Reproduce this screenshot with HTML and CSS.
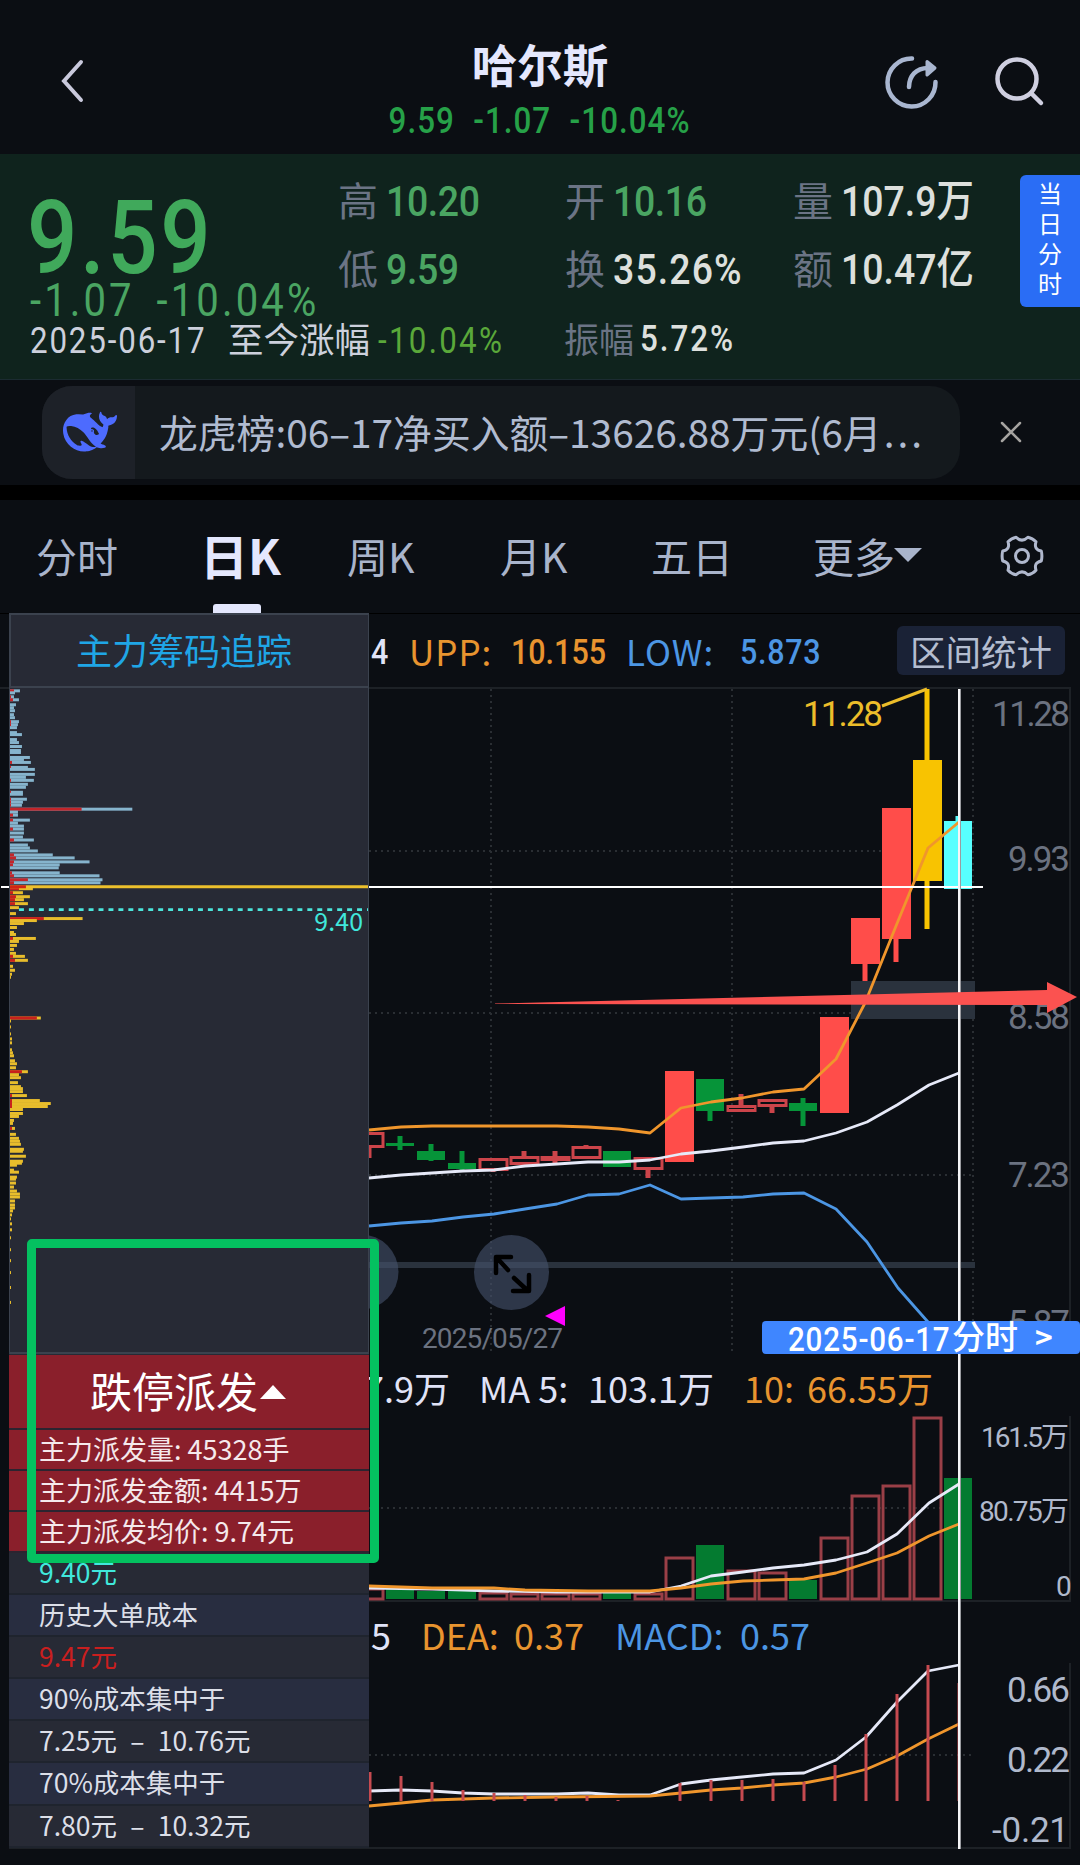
FILE: index.html
```html
<!DOCTYPE html>
<html lang="zh-CN">
<head>
    <meta charset="UTF-8">
    <meta name="viewport" content="width=device-width, initial-scale=1.0">
    <title>哈尔斯 - 日K</title>
    <link rel="stylesheet" href="styles.css">
</head>
<body>
    <header class="topbar">
        <svg class="back" width="24" height="44" viewBox="0 0 24 44"><path d="M21 3 4 22l17 19"/></svg>
        <div class="title">
            <h1>哈尔斯</h1>
            <p><span class="din">9.59 -1.07 -10.04%</span></p>
        </div>
        <svg class="share" width="56" height="56" viewBox="0 0 56 56">
            <path d="M30 4.5A24 24 0 1 0 53.5 28"/>
            <path d="M27 33c0-11 7-19 19-19"/>
            <path class="head" d="M45 7.5 53 14l-8 7z"/>
        </svg>
        <svg class="search" width="50" height="50" viewBox="0 0 50 50"><circle cx="22" cy="22" r="19.5"/><path d="m36 36 10 10"/></svg>
    </header>

    <section class="quote">
        <div class="quote-top">
            <div class="price">
                <div class="big"><span class="din">9.59</span></div>
                <div class="change"><span class="din">-1.07 -10.04%</span></div>
            </div>
            <div class="stat"><label>高</label><span class="din down">10.20</span></div>
            <div class="stat"><label>开</label><span class="din down">10.16</span></div>
            <div class="stat"><label>量</label><span class="din">107.9万</span></div>
            <div class="stat"><label>低</label><span class="din down">9.59</span></div>
            <div class="stat"><label>换</label><span class="din wide">35.26%</span></div>
            <div class="stat"><label>额</label><span class="din">10.47亿</span></div>
        </div>
        <div class="quote-bottom">
            <div class="date"><span class="din">2025-06-17</span></div>
            <div class="since">至今涨幅</div>
            <div class="since-value"><span class="din">-10.04%</span></div>
            <div class="stat"><label>振幅</label><span class="din wide">5.72%</span></div>
        </div>
        <div class="day-tag">当日分时</div>
    </section>

    <section class="news">
        <div class="news-pill">
            <div class="news-logo">
                <svg width="54" height="54" viewBox="0 0 24 24"><path d="M23.748 4.482c-.254-.124-.364.113-.512.234-.051.039-.094.09-.137.136-.372.397-.806.657-1.373.626-.829-.046-1.537.214-2.163.848-.133-.782-.575-1.248-1.247-1.548-.352-.156-.708-.311-.955-.65-.172-.241-.219-.51-.305-.774-.055-.16-.11-.323-.293-.35-.2-.031-.278.136-.356.276-.313.572-.434 1.202-.422 1.84.027 1.436.633 2.58 1.838 3.393.137.093.172.187.129.323-.082.28-.18.552-.266.833-.055.179-.137.217-.329.14a5.526 5.526 0 0 1-1.736-1.18c-.857-.828-1.631-1.742-2.597-2.458a11.365 11.365 0 0 0-.689-.471c-.985-.957.13-1.743.388-1.836.27-.098.093-.432-.779-.428-.872.004-1.67.295-2.687.684a3.055 3.055 0 0 1-.465.137 9.597 9.597 0 0 0-2.883-.102c-1.885.21-3.39 1.102-4.497 2.623C.082 8.606-.231 10.684.152 12.85c.403 2.284 1.569 4.175 3.36 5.653 1.858 1.533 3.997 2.284 6.438 2.14 1.482-.085 3.133-.284 4.994-1.86.47.234.962.327 1.78.397.63.059 1.236-.03 1.705-.128.735-.156.684-.837.419-.961-2.155-1.004-1.682-.595-2.113-.926 1.096-1.296 2.746-2.642 3.392-7.003.05-.347.007-.565 0-.845-.004-.17.035-.237.23-.256a4.173 4.173 0 0 0 1.545-.475c1.396-.763 1.96-2.015 2.093-3.517.02-.23-.004-.467-.247-.588zM11.581 18c-2.089-1.642-3.102-2.183-3.52-2.16-.392.024-.321.471-.235.763.09.288.207.486.371.739.114.167.192.416-.113.603-.673.416-1.842-.14-1.897-.167-1.361-.802-2.5-1.86-3.301-3.307-.774-1.393-1.224-2.887-1.298-4.482-.02-.386.093-.522.477-.592a4.696 4.696 0 0 1 1.529-.039c2.132.312 3.946 1.265 5.468 2.774.868.86 1.525 1.887 2.202 2.891.72 1.066 1.494 2.082 2.48 2.914.348.292.625.514.891.677-.802.09-2.14.11-3.054-.614zm1-6.44a.306.306 0 0 1 .415-.287.302.302 0 0 1 .2.288.306.306 0 0 1-.31.307.303.303 0 0 1-.304-.308zm3.11 1.596c-.2.081-.399.151-.59.16a1.245 1.245 0 0 1-.798-.254c-.274-.23-.47-.358-.552-.758a1.73 1.73 0 0 1 .016-.588c.07-.327-.008-.537-.239-.727-.187-.156-.426-.199-.688-.199a.559.559 0 0 1-.254-.078c-.11-.054-.2-.19-.114-.358.028-.054.16-.186.192-.21.356-.202.767-.136 1.146.016.352.144.618.408 1.001.782.391.451.462.576.685.914.176.265.336.537.445.848.067.195-.019.354-.25.452z"/></svg>
            </div>
            <p>龙虎榜:06–17净买入额–13626.88万元(6月<span>...</span></p>
        </div>
        <svg class="close" width="24" height="24" viewBox="0 0 24 24"><path d="m3 3 18 18M21 3 3 21"/></svg>
    </section>

    <nav class="tabs">
        <span>分时</span>
        <span class="active">日K</span>
        <span>周K</span>
        <span>月K</span>
        <span>五日</span>
        <span class="more">更多</span>
        <svg class="gear" width="46" height="46" viewBox="-23 -23 46 46">
            <circle r="6.5"/>
            <path d="M19.3-5Q20.5 0 19.3 5 11.5 6.6 14 14.2 10.5 18 5.9 18.8 0 13-5.9 18.8-10.5 18-14 14.2-11.5 6.6-19.3 5-20.5 0-19.3-5-11.5-6.6-14-14.2-10.5-18-5.9-18.8 0-13 5.9-18.8 10.5-18 14-14.2 11.5-6.6 19.3-5z"/>
        </svg>
    </nav>

    <main class="charts">
        <div class="legend legend-k">
            <span class="din">4</span>
            <span class="orange">UPP:</span>
            <span class="din orange">10.155</span>
            <span class="blue">LOW:</span>
            <span class="din blue">5.873</span>
            <button>区间统计</button>
        </div>
        <svg class="chart" id="kline" width="1080" height="673" viewBox="0 687 1080 673">
            <path class="grid" d="M491 689V1352M732 689V1352M973 689V1352M369 851H973M369 1013H973M369 1175H973"/>
            <path class="frame" d="M0 688H1070V1352"/>
            <g class="axis">
                <text x="992" y="726" textLength="78">11.28</text>
                <text x="1008" y="871" textLength="62">9.93</text>
                <text x="1008" y="1029" textLength="62">8.58</text>
                <text x="1008" y="1187" textLength="62">7.23</text>
                <text x="1008" y="1335" textLength="62">5.87</text>
                <text class="small" x="422" y="1348" textLength="141">2025/05/27</text>
            </g>
            <path class="gap" d="M851 981H975V1019H851zM369 1262H975V1268H369z"/>
            <g id="candles"></g>
            <polyline class="line orange" points="369,1130 401,1127 432,1126 557,1126 588,1127 619,1129 650,1133 681,1108 711,1102 742,1098 773,1092 804,1089 836,1059 865,1003 896,926 928,848 959,822"/>
            <polyline class="line white" points="369,1178 401,1175 432,1173 463,1171 494,1170 525,1166 557,1164 588,1162 619,1162 650,1160 681,1154 711,1151 743,1147 773,1143 804,1141 836,1133 867,1122 897,1105 929,1085 959,1073"/>
            <polyline class="line blue" points="369,1226 401,1223 432,1221 463,1217 494,1214 525,1209 557,1204 588,1195 619,1194 650,1185 681,1199 711,1198 743,1197 773,1194 804,1193 836,1209 867,1242 898,1288 928,1322"/>
            <path class="peak" d="m882 706 45-17"/>
            <text class="peak-label" x="803" y="726" textLength="80">11.28</text>
            <circle class="knob" cx="361" cy="1272" r="37.5"/>
            <circle class="knob" cx="511.5" cy="1272.5" r="37.5"/>
            <path class="expand" d="M496 1273V1257H511M497 1258 508 1270M514 1278 527 1290M513 1291H529V1275"/>
            <path class="marker" d="m545 1316 20-10v20z"/>
        </svg>
        <div class="legend legend-vol">
            <span>7.9万</span>
            <span>MA 5:</span>
            <span>103.1万</span>
            <span class="orange">10:</span>
            <span class="orange">66.55万</span>
        </div>
        <svg class="chart" id="volume" width="1080" height="188" viewBox="0 1416 1080 188">
            <path class="grid" d="M369 1508H973"/>
            <path class="frame" d="M1070 1416V1601H369"/>
            <g id="volumes"></g>
            <polyline class="line white" points="369,1588 432,1589 494,1591 557,1592 650,1592 681,1586 711,1576 743,1572 773,1568 804,1565 836,1560 867,1552 897,1534 929,1503 959,1484"/>
            <polyline class="line orange" points="369,1586 432,1588 494,1588 525,1590 588,1591 650,1591 681,1588 711,1584 743,1581 773,1580 804,1579 836,1573 867,1563 897,1553 929,1536 959,1524"/>
            <g class="axis light">
                <text class="small" x="981" y="1447" textLength="88">161.5万</text>
                <text class="small" x="979" y="1521" textLength="90">80.75万</text>
                <text class="small" x="1056" y="1596" textLength="14">0</text>
            </g>
        </svg>
        <div class="legend legend-macd">
            <span>5</span>
            <span class="orange">DEA:</span>
            <span class="orange">0.37</span>
            <span class="blue">MACD:</span>
            <span class="blue">0.57</span>
        </div>
        <svg class="chart" id="macd" width="1080" height="202" viewBox="0 1663 1080 202">
            <path class="grid" d="M369 1755H973"/>
            <path class="frame" d="M1070 1663V1848H9"/>
            <polyline class="line white" points="369,1791 401,1790 432,1791 463,1793 494,1794 557,1794 588,1793 619,1795 650,1795 681,1784 711,1780 742,1777 773,1774 804,1773 836,1760 866,1737 897,1702 928,1671 959,1665"/>
            <polyline class="line orange" points="369,1806 401,1803 432,1800 463,1799 494,1798 557,1797 650,1796 681,1793 711,1790 742,1788 773,1785 804,1783 836,1777 867,1769 897,1756 928,1739 959,1724"/>
            <g id="sticks"></g>
            <g class="axis light">
                <text x="1007" y="1702" textLength="63">0.66</text>
                <text x="1007" y="1772" textLength="63">0.22</text>
                <text x="992" y="1842" textLength="77">-0.21</text>
            </g>
        </svg>

        <!-- crosshair -->
        <div class="cross-x"></div>
        <div class="cross-y"></div>

        <aside class="chips">
            <h2>主力筹码追踪</h2>
            <svg class="chart" id="chips" width="360" height="666" viewBox="9 688 360 666">
                <g id="chip-bars"></g>
                <path class="cost" d="M18 910H369"/>
                <text x="315" y="932" textLength="49">9.40</text>
            </svg>
            <div class="dispatch">跌停派发<i></i></div>
            <ul>
                <li class="red">主力派发量: 45328手</li>
                <li class="red">主力派发金额: 4415万</li>
                <li class="red">主力派发均价: 9.74元</li>
                <li class="cyan">9.40元</li>
                <li class="alt">历史大单成本</li>
                <li class="hot">9.47元</li>
                <li class="alt">90%成本集中于</li>
                <li>7.25元&ensp;–&ensp;10.76元</li>
                <li class="alt">70%成本集中于</li>
                <li>7.80元&ensp;–&ensp;10.32元</li>
            </ul>
        </aside>

        <div class="minute-link"><span class="din">2025-06-17</span><b>分时</b><em>&gt;</em></div>
        <div class="mark-box"></div>
        <svg class="mark-arrow" width="584" height="36" viewBox="495 980 584 36"><path d="M495 1003.5 1047 990v-8l30 15-30 16v-8L495 1004z"/></svg>
    </main>

    <script src="script.js"></script>
</body>
</html>
```
FILE: styles.css
```css
* {
    box-sizing: border-box;
}

body {
    margin: 0;
    width: 1080px;
    height: 1865px;
    overflow: hidden;
    background: #0b0e13;
    color: #a9b4cb;
    font-family: "Noto Sans CJK SC", "Noto Sans", sans-serif;
}

h1, h2, p, ul {
    margin: 0;
    padding: 0;
}

svg {
    display: block;
    fill: none;
}

/* narrow numerals */
.din {
    display: inline-block;
    font-family: Roboto, "Noto Sans CJK SC", sans-serif;
    font-weight: 500;
    font-kerning: none;
    transform: scaleX(0.87);
    transform-origin: left center;
    white-space: nowrap;
}

.wide {
    letter-spacing: 1.3px;
}

/* top bar */
.topbar {
    display: flex;
    height: 154px;
    padding-left: 60px;
}

.back {
    margin-top: 59px;
    stroke: #c9c9dc;
    stroke-width: 4;
    stroke-linecap: round;
}

.title {
    width: 792px;
    margin-left: 60px;
    padding-top: 30px;
    text-align: center;
}

.title h1 {
    height: 63px;
    line-height: 66px;
    font-size: 45.5px;
    font-weight: 700;
    color: #e4e7fd;
}

.title p {
    height: 48px;
    line-height: 49px;
    font-size: 36px;
    color: #26a148;
}

.title .din {
    transform-origin: center;
    letter-spacing: 1.2px;
    word-spacing: 11px;
}

.share {
    margin: 54px 0 0 -54px;
    stroke: #a9b6d0;
    stroke-width: 4.5;
    stroke-linecap: round;
}

.share .head {
    fill: #a9b6d0;
    stroke-width: 3;
    stroke-linejoin: round;
}

.search {
    margin: 57px 0 0 57px;
    stroke: #cfcfe0;
    stroke-width: 4.5;
    stroke-linecap: round;
}

/* quote panel */
.quote {
    position: relative;
    height: 226px;
    padding-top: 13px;
    background: #0f231d;
    border-bottom: 1px solid #1b2b31;
}

.quote-top {
    display: grid;
    grid-template-columns: 309px 227px 228px 200px;
    grid-template-rows: 68px 68px;
    padding-left: 30px;
}

.price {
    grid-row: span 2;
}

.big {
    height: 80px;
    margin-top: 26px;
    line-height: 72px;
    font-size: 102px;
    color: #40a95b;
}

.big .din {
    margin-left: -3px;
    letter-spacing: 3px;
}

.change {
    height: 48px;
    line-height: 46px;
    font-size: 46px;
    color: #4aa562;
}

.change .din {
    letter-spacing: 3.6px;
    word-spacing: 10px;
    font-weight: 400;
}

.stat {
    display: flex;
    align-items: center;
    font-size: 43px;
    color: #dde0dd;
}

.stat label {
    width: 47px;
    margin: -5px 1px 0 -1px;
    font-size: 40px;
    line-height: 60px;
    color: #6b7485;
}

.stat .din {
    line-height: 60px;
}

.stat .down {
    color: #4aa562;
    letter-spacing: -0.4px;
}

.quote-bottom {
    display: flex;
    align-items: center;
    height: 71px;
    padding-left: 30px;
    font-size: 36px;
    line-height: 60px;
    color: #ccd0dc;
}

.date {
    width: 198px;
}

.date .din,
.since-value .din {
    letter-spacing: 2.1px;
    font-weight: 400;
}

.since-value .din {
    letter-spacing: 2.6px;
}

.since {
    width: 150px;
    margin-top: -2px;
    font-size: 35.5px;
}

.since-value {
    width: 187px;
    color: #5aa83a;
}

.quote-bottom .stat {
    font-size: 36px;
}

.quote-bottom .wide {
    letter-spacing: 2.3px;
}

.quote-bottom label {
    width: 75px;
    margin-top: -2px;
    font-size: 35px;
}

.day-tag {
    position: absolute;
    top: 21px;
    right: 0;
    width: 60px;
    height: 132px;
    padding: 3px 17px 0 18px;
    border-radius: 6px 0 0 6px;
    background: #2a6df5;
    color: #fff;
    font-size: 24px;
    line-height: 30px;
}

/* news strip */
.news {
    display: flex;
    height: 120px;
    padding: 6px 0 0 42px;
    border-bottom: 15px solid #000;
}

.news-pill {
    display: flex;
    width: 918px;
    height: 93px;
    overflow: hidden;
    border-radius: 30px;
    background: #14191d;
}

.news-logo {
    width: 93px;
    padding: 19px 0 0 21px;
    background: #1d2128;
}

.news-logo path {
    fill: #4d6bfe;
}

.news-pill p {
    padding-left: 24px;
    font-size: 38.8px;
    line-height: 91px;
    white-space: nowrap;
    color: #b0bbd0;
}

.news-pill p span {
    margin-left: 2px;
    letter-spacing: 3px;
}

.close {
    margin: 34px 0 0 39px;
    stroke: #a5a3a0;
    stroke-width: 2.5;
    stroke-linecap: round;
}

/* tabs */
.tabs {
    display: grid;
    grid-template-columns: 164px 147px 153px 151px 162px 185px 1fr;
    height: 113px;
    padding-left: 36px;
    font-size: 41px;
    line-height: 110px;
    white-space: nowrap;
    color: #a9b4cb;
}

.active {
    display: flex;
    flex-direction: column;
    height: 113px;
    font-size: 48px;
    font-weight: 700;
    line-height: 108px;
    color: #e4e7fd;
}

.active::after {
    content: "";
    width: 48px;
    height: 9px;
    margin: -4px 0 0 13px;
    border-radius: 3px 3px 0 0;
    background: #e4e7fd;
}

.more::after {
    content: "";
    display: inline-block;
    margin: 0 0 11px -1px;
    border: 14px solid transparent;
    border-top-color: #a9b4cb;
    border-bottom: 0;
}

.gear {
    margin: 33px 0 0 1px;
    stroke: #b0b8cd;
    stroke-width: 3;
    stroke-linejoin: round;
}

/* charts */
.charts {
    position: relative;
    border-top: 1px solid #000;
}

.legend {
    display: flex;
    align-items: center;
    padding-left: 371px;
    white-space: nowrap;
    color: #e0e3f7;
}

.orange {
    color: #e8942f;
}

.blue {
    color: #4c96e4;
}

.legend-k {
    height: 73px;
    font-size: 35px;
    line-height: 60px;
}

.legend-k > :nth-child(1) { width: 38px; }
.legend-k > :nth-child(2) { width: 102px; letter-spacing: 1px; }
.legend-k > :nth-child(3) { width: 115px; }
.legend-k > :nth-child(4) { width: 114px; letter-spacing: 1px; }
.legend-k > :nth-child(5) { width: 157px; letter-spacing: 0.8px; }

.legend-k .din {
    padding-top: 5px;
}

.legend-k button {
    width: 168px;
    height: 49px;
    padding: 0;
    border: 0;
    border-radius: 6px;
    background: #1a2236;
    color: #b4bdd0;
    font: 35.5px/49px "Noto Sans CJK SC", sans-serif;
}

.legend-vol {
    height: 56px;
    padding: 0 0 3px 364px;
    font-size: 36px;
    line-height: 52px;
}

.legend-vol > :nth-child(1) { width: 115px; }
.legend-vol > :nth-child(2) { width: 109px; }
.legend-vol > :nth-child(3) { width: 156px; }
.legend-vol > :nth-child(4) { width: 63px; }

.legend-macd {
    height: 59px;
    font-size: 36px;
    line-height: 58px;
}

.legend-macd > :nth-child(1) { width: 50px; }
.legend-macd > :nth-child(2) { width: 93px; }
.legend-macd > :nth-child(3) { width: 101px; }
.legend-macd > :nth-child(4) { width: 125px; }

.grid {
    stroke: #2a2e33;
    stroke-width: 2;
    stroke-dasharray: 2 4;
}

.frame {
    stroke: #1d2126;
    stroke-width: 2;
}

.chart text {
    font: 35px Roboto, "Noto Sans CJK SC", sans-serif;
    font-kerning: none;
}

.axis text {
    fill: #6b7280;
}

.axis.light text {
    fill: #b0b9cc;
}

.chart text.small {
    font-size: 28px;
}

.gap {
    fill: #2a323d;
}

.line {
    stroke-width: 2.8;
    stroke-linejoin: round;
}

.line.orange { stroke: #f0962c; }
.line.white { stroke: #e6e9f8; }
.line.blue { stroke: #4c96e4; }

.peak {
    stroke: #ecbd2a;
    stroke-width: 3;
}

.chart .peak-label {
    fill: #ecbd2a;
}

.knob {
    fill: #43506a;
    opacity: 0.62;
}

.expand {
    stroke: #000;
    stroke-width: 4.5;
    stroke-linecap: round;
    stroke-linejoin: round;
}

.marker {
    fill: #f0f;
}

.cross-x {
    position: absolute;
    top: 272px;
    left: 1px;
    width: 982px;
    height: 2px;
    background: #fff;
}

.cross-y {
    position: absolute;
    top: 75px;
    left: 958px;
    width: 3px;
    height: 1160px;
    border-right: 1px solid #9a9ba0;
    background: #f5f5f7;
}

/* chip tracking panel */
.chips {
    position: absolute;
    top: -1px;
    left: 9px;
    width: 360px;
    height: 1235px;
    background: #272a35;
}

.chips h2 {
    height: 75px;
    padding-left: 65px;
    border: 2px solid #3b424e;
    border-right-width: 1px;
    font-size: 36px;
    font-weight: 400;
    line-height: 69px;
    color: #1fa6e6;
}

#chips {
    border: solid #3b424e;
    border-width: 0 1px 2px 1px;
}

#chips text {
    font-family: "Noto Sans CJK SC", sans-serif;
    font-size: 25px;
    fill: #40e8dc;
}

.cost {
    stroke: #4be6dc;
    stroke-width: 3;
    stroke-dasharray: 5 5;
}

.dispatch {
    display: flex;
    align-items: center;
    height: 75px;
    margin-top: 1px;
    padding: 0 0 3px 81px;
    border-bottom: 2px solid #2c2430;
    background: #8a1f2b;
    color: #fff;
    font-size: 42px;
    line-height: 60px;
}

.dispatch i {
    margin: 4px 0 0 2px;
    border: 13px solid transparent;
    border-top: 0;
    border-bottom: 14px solid #fff;
}

.chips ul {
    list-style: none;
}

.chips li {
    height: 42.1px;
    padding-left: 30px;
    border-bottom: 2px solid #1f242e;
    font-size: 26.5px;
    line-height: 38px;
    white-space: nowrap;
    color: #dcdfe8;
}

.chips li.red {
    height: 41px;
    background: #8a1f2b;
    border-color: #2c2430;
    color: #f5e9ec;
    font-size: 27px;
    line-height: 37px;
}

.chips li.alt {
    background: #282d40;
}

.chips li.cyan {
    color: #40e8dc;
}

.chips li.hot {
    color: #c91f1f;
}

.minute-link {
    position: absolute;
    top: 707px;
    left: 762px;
    display: flex;
    width: 318px;
    height: 33px;
    padding-left: 26px;
    border-radius: 4px;
    background: #3f86ff;
    color: #fff;
    font-size: 34px;
    line-height: 37px;
}

.minute-link .din {
    width: 164px;
    letter-spacing: 0.9px;
}

.minute-link b {
    width: 83px;
    font-size: 33px;
    font-weight: 500;
    line-height: 28px;
}

.minute-link em {
    font-style: normal;
    font-size: 30px;
    font-weight: 700;
    line-height: 30px;
}

/* annotations */
.mark-box {
    position: absolute;
    top: 625px;
    left: 27px;
    width: 352px;
    height: 324px;
    border: 9px solid #04c160;
    border-radius: 5px;
}

.mark-arrow {
    position: absolute;
    top: 366px;
    left: 495px;
}

.mark-arrow path {
    fill: #fb5250;
}
```
FILE: script.js
```js
const NS = "http://www.w3.org/2000/svg";
const RED = "#ff4d4a";
const GREEN = "#069439";

function rect(parent, x, y, w, h, attrs) {
    const r = document.createElementNS(NS, "rect");
    const all = Object.assign({ x: x, y: y, width: w, height: h }, attrs);
    for (const key in all) r.setAttribute(key, all[key]);
    parent.appendChild(r);
}

// [center, high, top, bottom, low, type]  type: h = hollow, r = red, g = green
const candles = [
    [369, 1133, 1133, 1147, 1158, "h"],
    [400, 1136, 1143, 1146, 1150, "g"],
    [431, 1144, 1151, 1160, 1161, "g"],
    [462, 1151, 1163, 1169, 1170, "g"],
    [493, 1158, 1159, 1170, 1172, "h"],
    [524, 1151, 1157, 1164, 1165, "h"],
    [555, 1151, 1157, 1160, 1165, "h"],
    [586, 1145, 1147, 1158, 1158, "h"],
    [617, 1151, 1151, 1167, 1167, "g"],
    [648, 1158, 1158, 1169, 1178, "h"],
    [679, 1071, 1071, 1162, 1162, "r"],
    [710, 1079, 1079, 1111, 1121, "g"],
    [741, 1094, 1106, 1111, 1111, "h"],
    [772, 1100, 1100, 1106, 1113, "h"],
    [803, 1098, 1103, 1111, 1126, "g"],
    [834, 1017, 1017, 1113, 1113, "r"],
    [865, 918, 918, 964, 981, "r"],
    [896, 808, 808, 939, 962, "r"],
    [927, 689, 760, 881, 929, "y"],
    [958, 816, 821, 889, 889, "c"]
];
const fills = { r: RED, g: GREEN, y: "#f8c301", c: "#57ffff" };

const kg = document.getElementById("candles");
candles.forEach(([x, high, top, bottom, low, type]) => {
    const color = type === "h" ? "#cc444a" : fills[type];
    if (top > high) rect(kg, x - 2.5, high, 5, top - high, { fill: color });
    if (low > bottom) rect(kg, x - 2.5, bottom, 5, low - bottom, { fill: color });
    if (type === "h") {
        rect(kg, x - 13, top + 0.5, 27, Math.max(bottom - top - 1, 1), { stroke: color, "stroke-width": 3 });
    } else {
        const wide = type === "r" || type === "y";
        rect(kg, x - 14, top, wide ? 29 : 28, bottom - top, { fill: color });
    }
});

// [center, top, up]
const volumes = [
    [369, 1589, 1], [400, 1589, 0], [431, 1591, 0], [462, 1591, 0], [493, 1593, 1],
    [524, 1594, 1], [555, 1594, 1], [586, 1594, 1], [617, 1593, 0], [648, 1594, 1],
    [679, 1558, 1], [710, 1545, 0], [741, 1571, 1], [772, 1573, 1], [803, 1580, 0],
    [834, 1538, 1], [865, 1496, 1], [896, 1486, 1], [927, 1418, 1], [958, 1478, 0]
];
const vg = document.getElementById("volumes");
volumes.forEach(([x, top, up]) => {
    if (up) rect(vg, x - 13, top, 27, 1599 - top, { stroke: "#9a3f47", "stroke-width": 3 });
    else rect(vg, x - 14, top, 28, 1599 - top, { fill: "#047b30" });
});

const sticks = [
    [370, 1772], [401, 1776], [432, 1782], [463, 1790], [494, 1793], [525, 1795], [556, 1797],
    [587, 1796], [618, 1800], [680, 1783], [711, 1780], [742, 1780], [773, 1779], [804, 1782],
    [835, 1765], [866, 1734], [897, 1694], [928, 1665], [959, 1683]
];
const sg = document.getElementById("sticks");
sticks.forEach(([x, top]) => rect(sg, x - 1.5, top, 3, 1801 - top, { fill: "#c64a50" }));

// chip distribution: [y, length, main force length]
const above = [
    [690, 10, 4], [692, 5], [696, 4, 1], [699, 9, 3], [704, 6], [707, 4], [710, 5], [714, 4], [717, 5],
    [721, 9, 1], [724, 8, 1], [727, 7], [732, 7], [734, 12], [739, 7], [742, 9], [746, 12], [750, 11],
    [752, 11], [757, 20], [759, 14], [762, 21, 2], [767, 18, 1], [769, 25], [774, 25], [777, 16],
    [780, 24, 1], [784, 18], [787, 16], [792, 13, 1], [794, 13], [799, 17, 1], [802, 13, 1], [805, 12, 1],
    [809, 123, 72], [812, 8], [815, 8, 3], [820, 20, 3], [823, 8], [826, 14], [829, 14, 3], [833, 14],
    [837, 13], [840, 24, 4], [845, 18], [848, 20], [851, 28], [855, 43, 4], [858, 65, 6], [862, 80, 4],
    [865, 50, 3], [868, 49], [873, 50, 2], [876, 90, 4], [880, 93, 18], [883, 91, 4]
];
const below = [
    [889, 23, 9], [893, 13, 3], [897, 20, 6], [900, 14, 5], [904, 18, 5], [908, 9], [914, 6],
    [919, 73, 34], [921, 27], [924, 14], [928, 7], [933, 4], [935, 6], [939, 26, 3], [942, 9], [946, 7],
    [950, 4], [954, 6], [957, 15, 3], [961, 18, 5], [967, 3], [971, 5], [975, 2], [978, 1], [1019, 31, 27],
    [1022, 1], [1028, 1], [1035, 1], [1040, 2], [1044, 2], [1051, 2], [1054, 3], [1057, 4], [1062, 5],
    [1065, 7], [1069, 6], [1073, 18, 12], [1076, 9], [1079, 11], [1084, 8], [1088, 11], [1090, 13],
    [1093, 13], [1097, 17, 2], [1102, 30, 2], [1105, 41, 2], [1108, 38, 2], [1111, 13], [1115, 13],
    [1118, 9], [1122, 4], [1125, 3], [1130, 5, 2], [1136, 6], [1140, 9], [1143, 10], [1146, 11],
    [1151, 14], [1153, 13], [1158, 16], [1163, 13], [1165, 12], [1167, 7], [1172, 4], [1174, 9],
    [1179, 7], [1181, 6], [1185, 6], [1189, 4], [1193, 7], [1196, 10], [1199, 10], [1203, 5], [1207, 5],
    [1210, 5], [1213, 3], [1217, 2], [1221, 1], [1226, 2], [1232, 2], [1240, 1], [1252, 1], [1263, 1],
    [1275, 1], [1290, 1], [1305, 1]
];
const cg = document.getElementById("chip-bars");
function drawChips(rows, color, force) {
    rows.forEach(([y, len, main]) => {
        rect(cg, 9, y - 1.5, len, 3, { fill: color });
        if (main) rect(cg, 9, y - 1.5, main, 3, { fill: force });
    });
}
drawChips(above, "#86b4cd", "#c2252a");
drawChips(below, "#e8bd2c", "#c8201c");
// current price
rect(cg, 9, 885.5, 360, 3, { fill: "#ecc02c" });
rect(cg, 9, 885.5, 16, 3, { fill: "#d22414" });
```
